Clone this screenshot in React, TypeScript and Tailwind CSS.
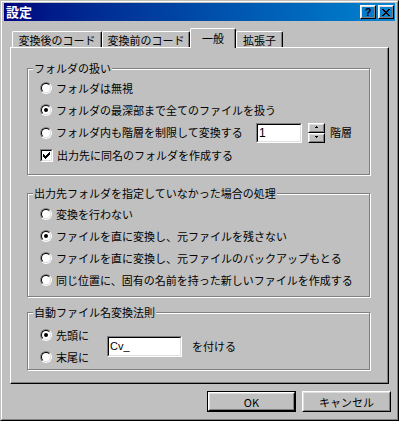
import type { ReactNode } from "react";

function Raised({ children, className = "" }: { children?: ReactNode; className?: string }) {
  return (
    <div className={`border border-t-white border-l-white border-r-black border-b-black ${className}`}>
      <div className="flex h-full w-full items-center justify-center border border-t-[#dfdfdf] border-l-[#dfdfdf] border-r-[#808080] border-b-[#808080]">
        {children}
      </div>
    </div>
  );
}

function Sunken({ children, className = "" }: { children?: ReactNode; className?: string }) {
  return (
    <div className={`border border-t-[#808080] border-l-[#808080] border-r-white border-b-white ${className}`}>
      <div className="flex h-full w-full items-center border border-t-black border-l-black border-r-[#dfdfdf] border-b-[#dfdfdf] bg-white">
        {children}
      </div>
    </div>
  );
}

function Radio({ checked }: { checked?: boolean }) {
  return (
    <span className="flex h-[12px] w-[12px] shrink-0 rounded-full border border-t-[#808080] border-l-[#808080] border-r-white border-b-white">
      <span className="flex h-full w-full items-center justify-center rounded-full border border-t-black border-l-black border-r-[#dfdfdf] border-b-[#dfdfdf] bg-white">
        {checked && <span className="h-[4px] w-[4px] rounded-full bg-black" />}
      </span>
    </span>
  );
}

function Check() {
  return (
    <span className="flex h-[13px] w-[13px] shrink-0 border border-t-[#808080] border-l-[#808080] border-r-white border-b-white">
      <span className="flex h-full w-full items-center justify-center border border-t-black border-l-black border-r-[#dfdfdf] border-b-[#dfdfdf] bg-white">
        <svg width="7" height="7" viewBox="0 0 7 7" shapeRendering="crispEdges">
          <rect x="6" y="0" width="1" height="3" fill="#000" />
          <rect x="5" y="1" width="1" height="3" fill="#000" />
          <rect x="4" y="2" width="1" height="3" fill="#000" />
          <rect x="3" y="3" width="1" height="3" fill="#000" />
          <rect x="2" y="4" width="1" height="3" fill="#000" />
          <rect x="1" y="3" width="1" height="3" fill="#000" />
          <rect x="0" y="2" width="1" height="3" fill="#000" />
        </svg>
      </span>
    </span>
  );
}

function Group({ title, className = "", children }: { title: string; className?: string; children: ReactNode }) {
  return (
    <div className={`flex w-[343px] flex-col border border-[#808080] shadow-[inset_1px_1px_0_#fff,1px_1px_0_#fff] ${className}`}>
      <span className="-mt-[7px] ml-[5px] w-fit bg-[#c0c0c0] px-[1px] leading-[12px]">{title}</span>
      {children}
    </div>
  );
}

function Row({ children, className = "h-[22px]" }: { children: ReactNode; className?: string }) {
  return <div className={`flex items-center gap-[4px] pl-[12px] ${className}`}>{children}</div>;
}

function Tab({ label, selected, className = "" }: { label: string; selected?: boolean; className?: string }) {
  return (
    <div
      className={`flex items-start justify-center rounded-t-[2px] border-t border-l border-r border-t-white border-l-white border-r-black bg-[#c0c0c0] shadow-[inset_-1px_0_0_#808080] ${
        selected ? "relative z-10 h-[20px] self-start pt-[3px]" : "h-[16px] pt-[2px]"
      } ${className}`}
    >
      <span className="leading-[12px]">{label}</span>
    </div>
  );
}

export default function App() {
  return (
    <div className="h-[421px] w-[399px] border border-t-[#c0c0c0] border-l-[#c0c0c0] border-r-black border-b-black bg-[#c0c0c0] font-['Noto_Sans_CJK_JP',sans-serif] text-[11px] text-black">
      <div className="flex h-full flex-col border border-t-white border-l-white border-r-[#808080] border-b-[#808080] px-[2px] pt-[1px]">
        <div className="flex h-[18px] items-center justify-between bg-linear-to-r from-[#000080] to-[#1084d0] pl-[2px] pr-[1px]">
          <span className="text-[13px] font-bold leading-[14px] text-white">設定</span>
          <div className="flex gap-[2px]">
            <Raised className="h-[14px] w-[16px]">
              <span className="font-['Liberation_Sans',sans-serif] text-[11px] font-bold leading-[10px]">?</span>
            </Raised>
            <Raised className="h-[14px] w-[16px]">
              <svg width="8" height="7" viewBox="0 0 8 7" shapeRendering="crispEdges">
                <path d="M0 0h2v1H0zM6 0h2v1H6zM1 1h2v1H1zM5 1h2v1H5zM2 2h4v1H2zM3 3h2v1H3zM2 4h4v1H2zM1 5h2v1H1zM5 5h2v1H5zM0 6h2v1H0zM6 6h2v1H6z" fill="#000" />
              </svg>
            </Raised>
          </div>
        </div>

        <div className="flex flex-col px-[6px]">
          <div className="mt-[7px] flex h-[19px] items-end">
            <Tab label="変換後のコード" className="ml-[2px] w-[90px]" />
            <Tab label="変換前のコード" className="w-[88px]" />
            <Tab label="一般" selected className="w-[46px]" />
            <Tab label="拡張子" className="w-[47px]" />
          </div>

          <div className="flex h-[337px] flex-col border border-t-white border-l-white border-r-black border-b-black pl-[16px] pt-[20px] shadow-[inset_-1px_-1px_0_#808080]">
            <Group title="フォルダの扱い" className="h-[107px]">
              <div className="mt-[3px] flex flex-col">
                <Row>
                  <Radio />
                  <span>フォルダは無視</span>
                </Row>
                <Row>
                  <Radio checked />
                  <span>フォルダの最深部まで全てのファイルを扱う</span>
                </Row>
                <Row className="h-[23px]">
                  <Radio />
                  <span className="w-[196px]">フォルダ内も階層を制限して変換する</span>
                  <Sunken className="h-[20px] w-[46px]">
                    <span className="pl-[1px] font-['Liberation_Sans',sans-serif] text-[12px] leading-[14px]">1</span>
                  </Sunken>
                  <div className="ml-[2px] flex h-[20px] w-[17px] flex-col">
                    <Raised className="h-[10px] w-[17px]">
                      <svg width="5" height="3" viewBox="0 0 5 3" shapeRendering="crispEdges">
                        <path d="M2 0h1v1H2zM1 1h3v1H1z" fill="#000" />
                      </svg>
                    </Raised>
                    <Raised className="h-[10px] w-[17px]">
                      <svg width="5" height="3" viewBox="0 0 5 3" shapeRendering="crispEdges">
                        <path d="M1 0h3v1H1zM2 1h1v1H2z" fill="#000" />
                      </svg>
                    </Raised>
                  </div>
                  <span className="ml-[1px]">階層</span>
                </Row>
                <Row>
                  <Check />
                  <span>出力先に同名のフォルダを作成する</span>
                </Row>
              </div>
            </Group>

            <Group title="出力先フォルダを指定していなかった場合の処理" className="mt-[18px] h-[104px]">
              <div className="mt-[4px] flex flex-col">
                <Row>
                  <Radio />
                  <span>変換を行わない</span>
                </Row>
                <Row>
                  <Radio checked />
                  <span>ファイルを直に変換し、元ファイルを残さない</span>
                </Row>
                <Row>
                  <Radio />
                  <span>ファイルを直に変換し、元ファイルのバックアップもとる</span>
                </Row>
                <Row>
                  <Radio />
                  <span>同じ位置に、固有の名前を持った新しいファイルを作成する</span>
                </Row>
              </div>
            </Group>

            <Group title="自動ファイル名変換法則" className="mt-[15px] h-[58px]">
              <div className="mt-[6px] flex items-center">
                <div className="flex w-[79px] flex-col">
                  <Row>
                    <Radio checked />
                    <span>先頭に</span>
                  </Row>
                  <Row>
                    <Radio />
                    <span>末尾に</span>
                  </Row>
                </div>
                <Sunken className="h-[21px] w-[75px]">
                  <span className="pl-[1px] font-['Liberation_Sans',sans-serif] text-[11px] leading-[14px]">Cv_</span>
                </Sunken>
                <span className="ml-[10px]">を付ける</span>
              </div>
            </Group>
          </div>

          <div className="-mr-[2px] mt-[7px] flex justify-end gap-[6px]">
            <div className="h-[21px] w-[89px] border border-black">
              <Raised className="h-full w-full">
                <span className="leading-[12px]">OK</span>
              </Raised>
            </div>
            <Raised className="h-[21px] w-[89px]">
              <span className="leading-[12px]">キャンセル</span>
            </Raised>
          </div>
        </div>
      </div>
    </div>
  );
}
